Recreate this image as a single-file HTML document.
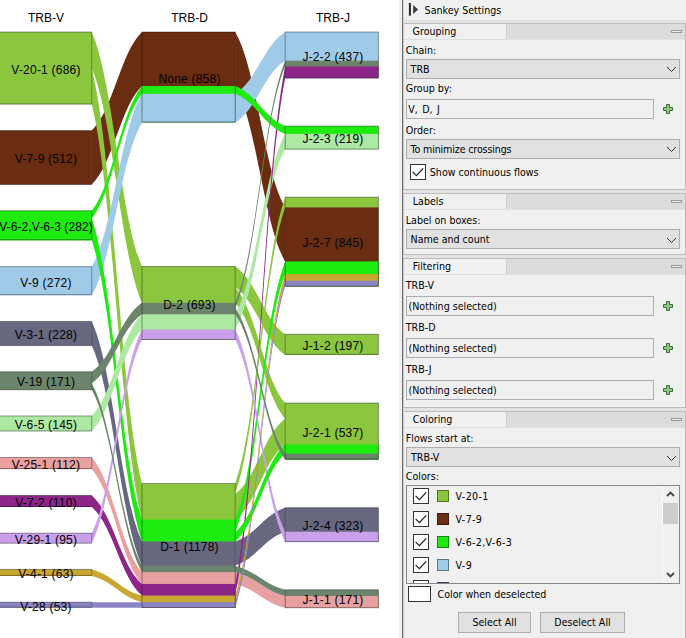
<!DOCTYPE html>
<html><head><meta charset="utf-8"><title>Sankey</title>
<style>
html,body{margin:0;padding:0;background:#fff;}
body{width:686px;height:638px;position:relative;overflow:hidden;font-family:"DejaVu Sans Condensed","Liberation Sans",sans-serif;font-size:10.6px;color:#000;}
#p{position:absolute;left:399px;top:0;width:287px;height:638px;background:#f0f0f0;}
#p div,#p span{position:absolute;box-sizing:border-box;white-space:nowrap;}
.t{line-height:14px;height:14px;}
.gap{left:4px;width:283px;height:3px;background:#e3e3e3;}
.sec{left:4px;width:283px;border:1px solid #bcbcbc;border-left-color:#c8c8c8;background:#f0f0f0;}
.hd{left:5px;width:281px;height:16px;background:#dcdcdc;border-bottom:1px solid #e2e2e2;}
.tab{left:5px;width:103px;height:16px;background:#f0f0f0;border-right:1px solid #cfcfcf;border-bottom:1px solid #dedede;}
.min{left:272px;width:11px;height:3px;border:1px solid #9a9a9a;background:#ececec;}
.cb{left:7px;width:274px;height:20px;background:#e1e1e1;border:1px solid #adadad;}
.tf{left:7px;width:248px;height:20px;background:#f0f0f0;border:1px solid #abadb3;}
.btn{height:21px;background:#e1e1e1;border:1px solid #adadad;text-align:center;line-height:19px;}
.chk{width:16px;height:16px;background:#fff;border:1px solid #333;}
.li{letter-spacing:.35px}
.sw{width:12px;height:12px;border:1px solid rgba(0,0,0,.42);}
</style></head><body>
<svg width="400" height="638" viewBox="0 0 400 638" style="position:absolute;left:0;top:0">
<path fill="#6b2d12" d="M91.7 130.54C113.23 110.34 120.47 52.2 142 32V86.01C120.47 106.22 113.23 164.35 91.7 184.56Z"/>
<path fill="#8cc63f" d="M91.7 32C113.23 80.07 120.47 218.4 142 266.47V302.86C120.47 254.79 113.23 116.46 91.7 68.4Z"/>
<path fill="#8cc63f" d="M91.7 68.4C113.23 153.5 120.47 398.42 142 483.53V519.5C120.47 434.39 113.23 189.48 91.7 104.37Z"/>
<path fill="#9fcbe9" d="M91.7 266.65C113.23 231.22 120.47 129.25 142 93.82V122.52C120.47 157.95 113.23 259.92 91.7 295.35Z"/>
<path fill="#676780" d="M91.7 321.52C113.23 366.61 120.47 496.36 142 541.44V565.5C120.47 520.41 113.23 390.66 91.7 345.57Z"/>
<path fill="#1eeb10" d="M91.7 218.54C113.23 280.24 120.47 457.8 142 519.5V541.44C120.47 479.74 113.23 302.18 91.7 240.48Z"/>
<path fill="#aee9a3" d="M91.7 415.96C113.23 395.11 120.47 335.11 142 314.26V329.55C120.47 350.4 113.23 410.41 91.7 431.26Z"/>
<path fill="#e9a0a0" d="M91.7 457.43C113.23 480.95 120.47 548.62 142 572.14V583.96C120.47 560.44 113.23 492.76 91.7 469.24Z"/>
<path fill="#8e2589" d="M91.7 495.42C113.23 513.57 120.47 565.81 142 583.96V595.56C120.47 577.41 113.23 525.17 91.7 507.02Z"/>
<path fill="#6b846b" d="M91.7 371.75C113.23 357.62 120.47 316.98 142 302.86V314.26C120.47 328.38 113.23 369.02 91.7 383.14Z"/>
<path fill="#c9a0e9" d="M91.7 533.19C113.23 491.45 120.47 371.3 142 329.55V339.58C120.47 381.32 113.23 501.47 91.7 543.22Z"/>
<path fill="#1eeb10" d="M91.7 210.73C113.23 185.16 120.47 111.58 142 86.01V93.82C120.47 119.39 113.23 192.97 91.7 218.54Z"/>
<path fill="#6b846b" d="M91.7 383.14C113.23 420.53 120.47 528.11 142 565.5V572.14C120.47 534.76 113.23 427.17 91.7 389.79Z"/>
<path fill="#c9a832" d="M91.7 569.39C113.23 574.76 120.47 590.2 142 595.56V602.21C120.47 596.84 113.23 581.4 91.7 576.04Z"/>
<path fill="#8a84c4" d="M91.7 602.21C113.23 602.21 120.47 602.21 142 602.21V607.8C120.47 607.8 113.23 607.8 91.7 607.8Z"/>
<path fill="#6b2d12" d="M235.2 32C256.6 67.96 263.8 171.45 285.2 207.41V261.42C263.8 225.46 256.6 121.97 235.2 86.01Z"/>
<path fill="#9fcbe9" d="M235.2 93.82C256.6 81.15 263.8 44.67 285.2 32V60.7C263.8 73.37 256.6 109.84 235.2 122.52Z"/>
<path fill="#8cc63f" d="M235.2 493.76C256.6 478.37 263.8 434.07 285.2 418.68V444.42C263.8 459.81 256.6 504.11 235.2 519.5Z"/>
<path fill="#676780" d="M235.2 541.44C256.6 534.53 263.8 514.62 285.2 507.7V531.75C263.8 538.67 256.6 558.58 235.2 565.5Z"/>
<path fill="#8cc63f" d="M235.2 266.47C256.6 280.37 263.8 320.39 285.2 334.3V355.08C263.8 341.18 256.6 301.16 235.2 287.25Z"/>
<path fill="#8cc63f" d="M235.2 287.25C256.6 310.99 263.8 379.32 285.2 403.07V418.68C263.8 394.94 256.6 326.61 235.2 302.86Z"/>
<path fill="#aee9a3" d="M235.2 314.26C256.6 277.28 263.8 170.87 285.2 133.89V149.19C263.8 186.17 256.6 292.58 235.2 329.55Z"/>
<path fill="#1eeb10" d="M235.2 519.5C256.6 466.59 263.8 314.33 285.2 261.42V274.08C263.8 326.99 256.6 479.25 235.2 532.16Z"/>
<path fill="#e9a0a0" d="M235.2 572.14C256.6 577.03 263.8 591.1 285.2 595.98V607.8C263.8 602.91 256.6 588.85 235.2 583.96Z"/>
<path fill="#8e2589" d="M235.2 583.96C256.6 477.87 263.8 172.58 285.2 66.5V78.1C263.8 184.19 256.6 489.48 235.2 595.56Z"/>
<path fill="#8cc63f" d="M235.2 483.53C256.6 424.82 263.8 255.88 285.2 197.17V207.41C263.8 266.11 256.6 435.05 235.2 493.76Z"/>
<path fill="#c9a0e9" d="M235.2 329.55C256.6 371.01 263.8 490.3 285.2 531.75V541.78C263.8 500.32 256.6 381.03 235.2 339.58Z"/>
<path fill="#1eeb10" d="M235.2 532.16C256.6 514.17 263.8 462.41 285.2 444.42V453.7C263.8 471.69 256.6 523.46 235.2 541.44Z"/>
<path fill="#1eeb10" d="M235.2 86.01C256.6 94.23 263.8 117.87 285.2 126.09V133.89C263.8 125.68 256.6 102.04 235.2 93.82Z"/>
<path fill="#c9a832" d="M235.2 595.56C256.6 529.65 263.8 339.99 285.2 274.08V280.73C263.8 346.63 256.6 536.3 235.2 602.21Z"/>
<path fill="#6b846b" d="M235.2 565.92C256.6 570.81 263.8 584.87 285.2 589.76V595.98C263.8 591.1 256.6 577.03 235.2 572.14Z"/>
<path fill="#6b846b" d="M235.2 308.24C256.6 338.06 263.8 423.88 285.2 453.7V459.72C263.8 429.9 256.6 344.08 235.2 314.26Z"/>
<path fill="#8a84c4" d="M235.2 602.21C256.6 536.3 263.8 346.63 285.2 280.73V286.32C263.8 352.22 256.6 541.89 235.2 607.8Z"/>
<path fill="#6b846b" d="M235.2 302.86C256.6 253.22 263.8 110.34 285.2 60.7V66.08C263.8 115.72 256.6 258.6 235.2 308.24Z"/>
<path fill="#6b846b" d="M235.2 565.5C256.6 463.11 263.8 168.46 285.2 66.08V66.5C263.8 168.88 256.6 463.53 235.2 565.92Z"/>
<rect x="-1.5" y="32" width="93.2" height="72.37" fill="#8cc63f"/>
<rect x="-1.5" y="130.54" width="93.2" height="54.01" fill="#6b2d12"/>
<rect x="-1.5" y="210.73" width="93.2" height="29.75" fill="#1eeb10"/>
<rect x="-1.5" y="266.65" width="93.2" height="28.7" fill="#9fcbe9"/>
<rect x="-1.5" y="321.52" width="93.2" height="24.05" fill="#676780"/>
<rect x="-1.5" y="371.75" width="93.2" height="18.04" fill="#6b846b"/>
<rect x="-1.5" y="415.96" width="93.2" height="15.3" fill="#aee9a3"/>
<rect x="-1.5" y="457.43" width="93.2" height="11.82" fill="#e9a0a0"/>
<rect x="-1.5" y="495.42" width="93.2" height="11.6" fill="#8e2589"/>
<rect x="-1.5" y="533.19" width="93.2" height="10.02" fill="#c9a0e9"/>
<rect x="-1.5" y="569.39" width="93.2" height="6.65" fill="#c9a832"/>
<rect x="-1.5" y="602.21" width="93.2" height="5.59" fill="#8a84c4"/>
<rect x="142" y="32" width="93.2" height="90.52" fill="#6b2d12"/>
<rect x="142" y="86.01" width="93.2" height="36.5" fill="#1eeb10"/>
<rect x="142" y="93.82" width="93.2" height="28.7" fill="#9fcbe9"/>
<rect x="142" y="266.47" width="93.2" height="73.11" fill="#8cc63f"/>
<rect x="142" y="302.86" width="93.2" height="36.71" fill="#6b846b"/>
<rect x="142" y="314.26" width="93.2" height="25.32" fill="#aee9a3"/>
<rect x="142" y="329.55" width="93.2" height="10.02" fill="#c9a0e9"/>
<rect x="142" y="483.53" width="93.2" height="124.27" fill="#8cc63f"/>
<rect x="142" y="519.5" width="93.2" height="88.3" fill="#1eeb10"/>
<rect x="142" y="541.44" width="93.2" height="66.36" fill="#676780"/>
<rect x="142" y="565.5" width="93.2" height="42.3" fill="#6b846b"/>
<rect x="142" y="572.14" width="93.2" height="35.66" fill="#e9a0a0"/>
<rect x="142" y="583.96" width="93.2" height="23.84" fill="#8e2589"/>
<rect x="142" y="595.56" width="93.2" height="12.24" fill="#c9a832"/>
<rect x="142" y="602.21" width="93.2" height="5.59" fill="#8a84c4"/>
<rect x="285.2" y="32" width="93.2" height="46.1" fill="#9fcbe9"/>
<rect x="285.2" y="60.7" width="93.2" height="17.41" fill="#6b846b"/>
<rect x="285.2" y="66.5" width="93.2" height="11.6" fill="#8e2589"/>
<rect x="285.2" y="126.09" width="93.2" height="23.1" fill="#1eeb10"/>
<rect x="285.2" y="133.89" width="93.2" height="15.3" fill="#aee9a3"/>
<rect x="285.2" y="197.17" width="93.2" height="89.14" fill="#8cc63f"/>
<rect x="285.2" y="207.41" width="93.2" height="78.91" fill="#6b2d12"/>
<rect x="285.2" y="261.42" width="93.2" height="24.9" fill="#1eeb10"/>
<rect x="285.2" y="274.08" width="93.2" height="12.24" fill="#c9a832"/>
<rect x="285.2" y="280.73" width="93.2" height="5.59" fill="#8a84c4"/>
<rect x="285.2" y="334.3" width="93.2" height="20.78" fill="#8cc63f"/>
<rect x="285.2" y="403.07" width="93.2" height="56.65" fill="#8cc63f"/>
<rect x="285.2" y="444.42" width="93.2" height="15.3" fill="#1eeb10"/>
<rect x="285.2" y="453.7" width="93.2" height="6.01" fill="#6b846b"/>
<rect x="285.2" y="507.7" width="93.2" height="34.08" fill="#676780"/>
<rect x="285.2" y="531.75" width="93.2" height="10.02" fill="#c9a0e9"/>
<rect x="285.2" y="589.76" width="93.2" height="18.04" fill="#6b846b"/>
<rect x="285.2" y="595.98" width="93.2" height="11.82" fill="#e9a0a0"/>
<g fill="none" stroke="rgba(0,0,0,0.38)" stroke-width="1">
<rect x="-1.5" y="32" width="93.2" height="72"/>
<rect x="-1.5" y="130.54" width="93.2" height="54"/>
<rect x="-1.5" y="210.73" width="93.2" height="29"/>
<rect x="-1.5" y="266.65" width="93.2" height="28"/>
<rect x="-1.5" y="321.52" width="93.2" height="24"/>
<rect x="-1.5" y="371.75" width="93.2" height="18"/>
<rect x="-1.5" y="415.96" width="93.2" height="15"/>
<rect x="-1.5" y="457.43" width="93.2" height="11"/>
<rect x="-1.5" y="495.42" width="93.2" height="11"/>
<rect x="-1.5" y="533.19" width="93.2" height="10"/>
<rect x="-1.5" y="569.39" width="93.2" height="6"/>
<rect x="-1.5" y="602.21" width="93.2" height="5"/>
<rect x="142" y="32" width="93.2" height="90"/>
<rect x="142" y="266.47" width="93.2" height="73"/>
<rect x="142" y="483.53" width="93.2" height="124"/>
<rect x="285.2" y="32" width="93.2" height="46"/>
<rect x="285.2" y="126.09" width="93.2" height="23"/>
<rect x="285.2" y="197.17" width="93.2" height="89"/>
<rect x="285.2" y="334.3" width="93.2" height="20"/>
<rect x="285.2" y="403.07" width="93.2" height="56"/>
<rect x="285.2" y="507.7" width="93.2" height="34"/>
<rect x="285.2" y="589.76" width="93.2" height="18"/>
</g>
<g font-family="Liberation Sans, Arial, sans-serif" font-size="12" text-anchor="middle" fill="#000" letter-spacing="0.22">
<text x="46" y="21.7" letter-spacing="0">TRB-V</text>
<text x="46" y="73.79">V-20-1 (686)</text>
<text x="46" y="163.15">V-7-9 (512)</text>
<text x="46" y="231.21" letter-spacing="0.1">V-6-2,V-6-3 (282)</text>
<text x="46" y="286.6">V-9 (272)</text>
<text x="46" y="339.15">V-3-1 (228)</text>
<text x="46" y="386.37">V-19 (171)</text>
<text x="46" y="429.21">V-6-5 (145)</text>
<text x="46" y="468.94">V-25-1 (112)</text>
<text x="46" y="506.82">V-7-2 (110)</text>
<text x="46" y="543.81">V-29-1 (95)</text>
<text x="46" y="578.31">V-4-1 (63)</text>
<text x="46" y="610.6">V-28 (53)</text>
<text x="189.5" y="21.7" letter-spacing="0">TRB-D</text>
<text x="189.5" y="82.86">None (858)</text>
<text x="189.5" y="308.62">D-2 (693)</text>
<text x="189.5" y="551.26">D-1 (1178)</text>
<text x="333" y="21.7" letter-spacing="0">TRB-J</text>
<text x="333" y="60.65">J-2-2 (437)</text>
<text x="333" y="143.24">J-2-3 (219)</text>
<text x="333" y="247.34">J-2-7 (845)</text>
<text x="333" y="350.29">J-1-2 (197)</text>
<text x="333" y="436.99">J-2-1 (537)</text>
<text x="333" y="530.34">J-2-4 (323)</text>
<text x="333" y="604.38">J-1-1 (171)</text>
</g></svg>
<div id="p">
<div style="left:3px;top:0;width:1px;height:638px;background:#6e6e6e"></div>
<div style="left:4px;top:0;width:1px;height:638px;background:#d2d2d2"></div>
<!-- title -->
<svg style="position:absolute;left:9px;top:3px" width="12" height="13" viewBox="0 0 12 13"><rect x="0.9" y="0" width="2" height="12.7" fill="#2b2b2b"/><path d="M5.1 2.1L10.2 6.4L5.1 10.9Z" fill="#404040"/></svg>
<div class="t" style="left:25.6px;top:2.5px">Sankey Settings</div>
<div class="gap" style="top:20px"></div>
<!-- Grouping -->
<div class="sec" style="top:23px;height:167px"></div>
<div class="hd" style="top:24px"></div><div class="tab" style="top:24px"></div><div class="min" style="top:30px"></div>
<div class="t" style="left:13.6px;top:23.5px">Grouping</div>
<div class="t" style="left:6.8px;top:43px">Chain:</div>
<div class="cb" style="top:59px"></div><div class="t" style="left:11.6px;top:62px">TRB</div>
<svg style="position:absolute;left:267px;top:66px" width="11" height="7" viewBox="0 0 11 7"><path d="M1 1L5.5 5.5L10 1" fill="none" stroke="#333" stroke-width="1"/></svg>
<div class="t" style="left:6.8px;top:80.8px">Group by:</div>
<div class="tf" style="top:99px"></div><div class="t" style="left:9.3px;top:102px;word-spacing:1.4px">V, D, J</div>
<svg class="plus" style="position:absolute;left:263px;top:103px" width="12" height="12" viewBox="0 0 12 12"><path d="M4.5 1.5H7.5V4.5H10.5V7.5H7.5V10.5H4.5V7.5H1.5V4.5H4.5Z" fill="#90c780" stroke="#3d6c38" stroke-width="1"/></svg>
<div class="t" style="left:6.8px;top:122.5px">Order:</div>
<div class="cb" style="top:138.5px"></div><div class="t" style="left:11.6px;top:142px;letter-spacing:-0.14px">To minimize crossings</div>
<svg style="position:absolute;left:267px;top:145.5px" width="11" height="7" viewBox="0 0 11 7"><path d="M1 1L5.5 5.5L10 1" fill="none" stroke="#333" stroke-width="1"/></svg>
<div class="chk" style="left:11px;top:164px"></div>
<svg style="position:absolute;left:11px;top:164px" width="16" height="16" viewBox="0 0 16 16"><path d="M2.6 7.9L6.4 11.6L13.2 4.4" fill="none" stroke="#222" stroke-width="1.3"/></svg>
<div class="t" style="left:30.8px;top:165px">Show continuous flows</div>
<div class="gap" style="top:190px"></div>
<!-- Labels -->
<div class="sec" style="top:193px;height:62px"></div>
<div class="hd" style="top:194px"></div><div class="tab" style="top:194px"></div><div class="min" style="top:200px"></div>
<div class="t" style="left:13.8px;top:194.3px">Labels</div>
<div class="t" style="left:6.8px;top:212.5px">Label on boxes:</div>
<div class="cb" style="top:229px"></div><div class="t" style="left:11.5px;top:232.2px">Name and count</div>
<svg style="position:absolute;left:267px;top:237px" width="11" height="7" viewBox="0 0 11 7"><path d="M1 1L5.5 5.5L10 1" fill="none" stroke="#333" stroke-width="1"/></svg>
<div class="gap" style="top:255px"></div>
<!-- Filtering -->
<div class="sec" style="top:258px;height:150px"></div>
<div class="hd" style="top:259px"></div><div class="tab" style="top:259px"></div><div class="min" style="top:265px"></div>
<div class="t" style="left:13.8px;top:259.4px">Filtering</div>
<div class="t" style="left:6.8px;top:278.2px">TRB-V</div>
<div class="tf" style="top:296px"></div><div class="t" style="left:9.5px;top:299px">(Nothing selected)</div>
<svg class="plus" style="position:absolute;left:263px;top:300px" width="12" height="12" viewBox="0 0 12 12"><path d="M4.5 1.5H7.5V4.5H10.5V7.5H7.5V10.5H4.5V7.5H1.5V4.5H4.5Z" fill="#90c780" stroke="#3d6c38" stroke-width="1"/></svg>
<div class="t" style="left:6.8px;top:320.2px">TRB-D</div>
<div class="tf" style="top:338px"></div><div class="t" style="left:9.5px;top:341px">(Nothing selected)</div>
<svg class="plus" style="position:absolute;left:263px;top:342px" width="12" height="12" viewBox="0 0 12 12"><path d="M4.5 1.5H7.5V4.5H10.5V7.5H7.5V10.5H4.5V7.5H1.5V4.5H4.5Z" fill="#90c780" stroke="#3d6c38" stroke-width="1"/></svg>
<div class="t" style="left:6.8px;top:362.3px">TRB-J</div>
<div class="tf" style="top:380px"></div><div class="t" style="left:9.5px;top:383px">(Nothing selected)</div>
<svg class="plus" style="position:absolute;left:263px;top:384px" width="12" height="12" viewBox="0 0 12 12"><path d="M4.5 1.5H7.5V4.5H10.5V7.5H7.5V10.5H4.5V7.5H1.5V4.5H4.5Z" fill="#90c780" stroke="#3d6c38" stroke-width="1"/></svg>
<div class="gap" style="top:408px"></div>
<!-- Coloring -->
<div class="sec" style="top:411px;height:240px"></div>
<div class="hd" style="top:412px"></div><div class="tab" style="top:412px"></div><div class="min" style="top:418px"></div>
<div class="t" style="left:13.8px;top:412.4px">Coloring</div>
<div class="t" style="left:6.8px;top:430.7px">Flows start at:</div>
<div class="cb" style="top:447px"></div><div class="t" style="left:12px;top:450.4px">TRB-V</div>
<svg style="position:absolute;left:267px;top:454.5px" width="11" height="7" viewBox="0 0 11 7"><path d="M1 1L5.5 5.5L10 1" fill="none" stroke="#333" stroke-width="1"/></svg>
<div class="t" style="left:6.8px;top:469px">Colors:</div>
<div id="list" style="left:7px;top:485px;width:274px;height:99px;border:1px solid #828790;background:#f0f0f0;overflow:hidden">
 <div class="chk" style="left:6px;top:2px"></div><div class="sw" style="left:30px;top:4px;background:#8cc63f"></div><div class="t li" style="left:48.6px;top:3px">V-20-1</div>
 <div class="chk" style="left:6px;top:25px"></div><div class="sw" style="left:30px;top:27px;background:#6b2d12"></div><div class="t li" style="left:48.6px;top:26px">V-7-9</div>
 <div class="chk" style="left:6px;top:48px"></div><div class="sw" style="left:30px;top:50px;background:#1eeb10"></div><div class="t li" style="left:48.6px;top:49px">V-6-2,V-6-3</div>
 <div class="chk" style="left:6px;top:71px"></div><div class="sw" style="left:30px;top:73px;background:#9fcbe9"></div><div class="t li" style="left:48.6px;top:72px">V-9</div>
 <div class="chk" style="left:6px;top:94px"></div><div class="sw" style="left:30px;top:96px;background:#676780"></div><div class="t li" style="left:48.6px;top:95px">V-3-1</div>
 <svg style="position:absolute;left:6px;top:2px" width="16" height="90" viewBox="0 0 16 90"><path d="M2.6 7.9L6.4 11.6L13.2 4.4M2.6 30.9L6.4 34.6L13.2 27.4M2.6 53.9L6.4 57.6L13.2 50.4M2.6 76.9L6.4 80.6L13.2 73.4" fill="none" stroke="#222" stroke-width="1.3"/></svg>
 <div style="left:255px;top:0;width:17px;height:97px;background:#f0f0f0;border-left:1px solid #fafafa"></div>
 <div style="left:256px;top:17px;width:15px;height:21px;background:#cdcdcd"></div>
 <svg style="position:absolute;left:259px;top:5px" width="9" height="6" viewBox="0 0 9 6"><path d="M1 5L4.5 1.6L8 5" fill="none" stroke="#454545" stroke-width="1.9"/></svg>
 <svg style="position:absolute;left:259px;top:86px" width="9" height="6" viewBox="0 0 9 6"><path d="M1 1L4.5 4.4L8 1" fill="none" stroke="#454545" stroke-width="1.9"/></svg>
</div>
<div style="left:9px;top:586px;width:23px;height:16px;background:#fff;border:1px solid #333"></div>
<div class="t" style="left:38.5px;top:587px">Color when deselected</div>
<div class="btn" style="left:59px;top:612px;width:73px">Select All</div>
<div class="btn" style="left:141px;top:612px;width:85px">Deselect All</div>
</div>
</body></html>
